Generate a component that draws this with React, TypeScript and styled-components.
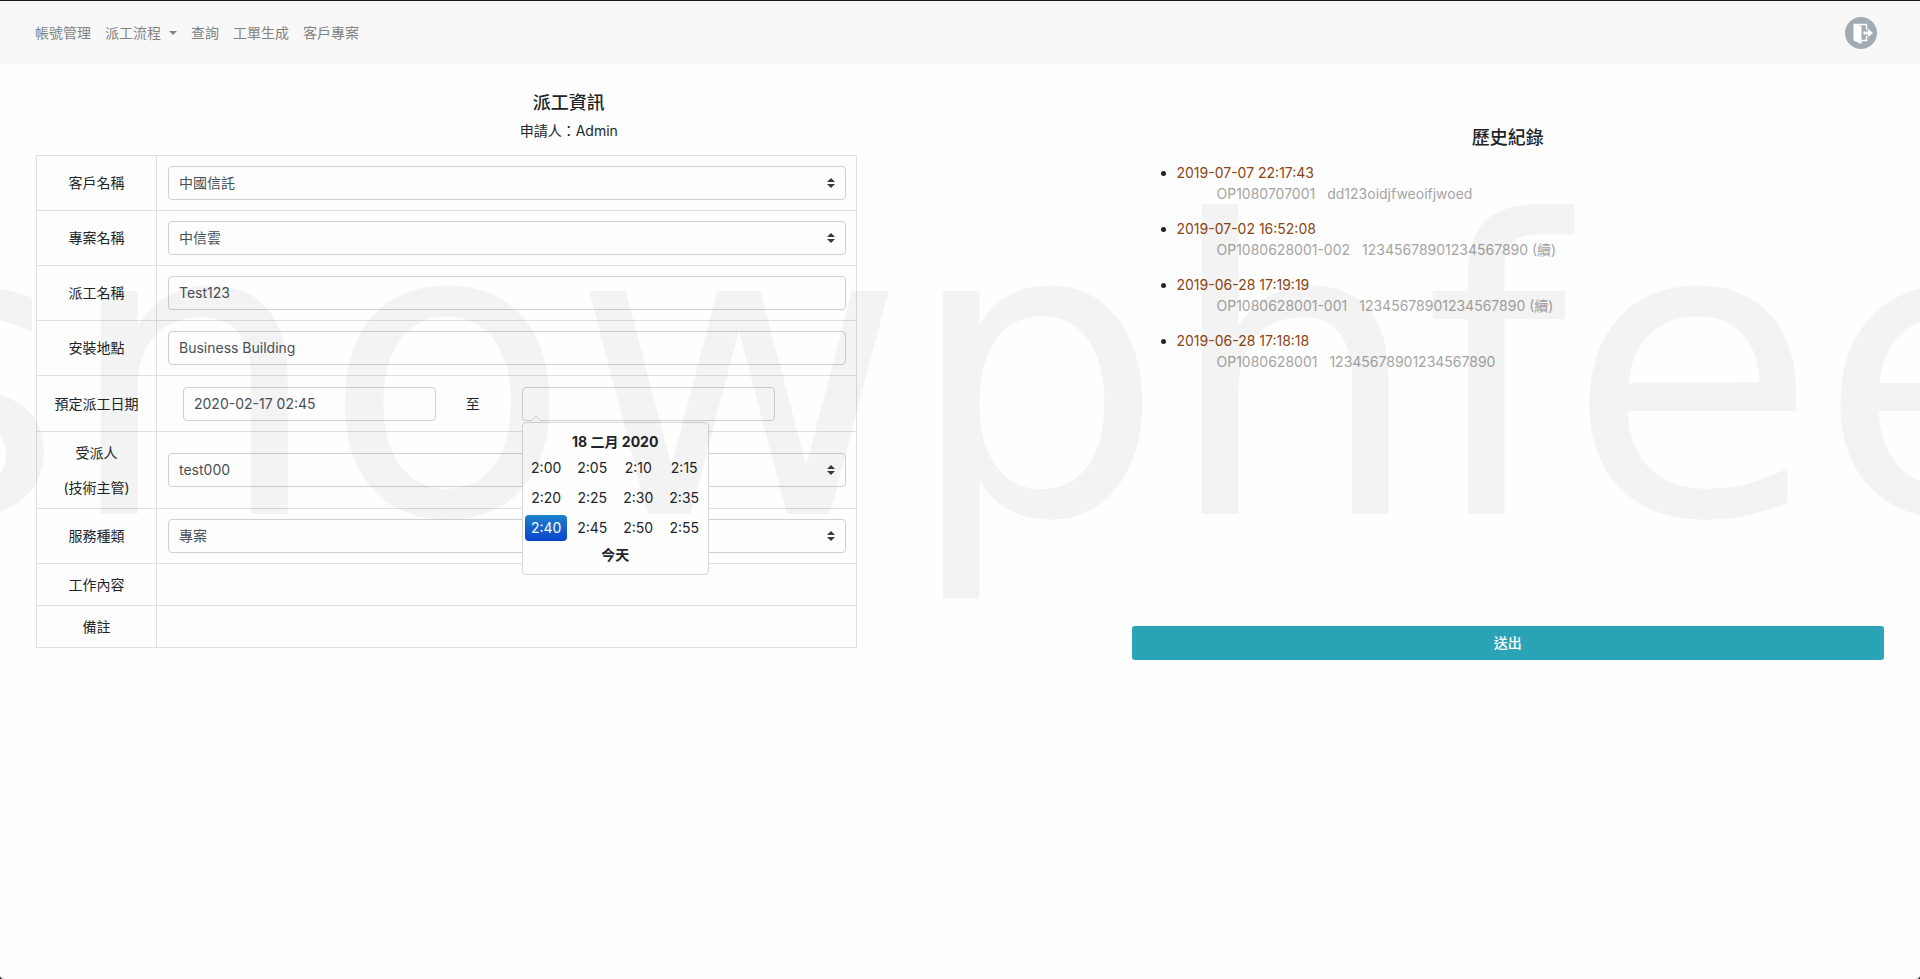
import React from 'react';
import styled, { createGlobalStyle, css } from 'styled-components';

const GlobalStyle = createGlobalStyle`
  *, *::before, *::after { box-sizing: border-box; }
  html { background: #1c1a1e; }
  body {
    margin: 0;
    color: #212529;
    font-family: Inter, "Noto Sans CJK TC", sans-serif;
    font-size: 14px;
    line-height: 21px;
  }
  button, input, select { font: inherit; }
`;

const Page = styled.div`
  position: relative;
  min-height: 100vh;
  overflow: hidden;
  border-top: 1px solid #1c1a1e;
  border-radius: 0 0 4px 4px;
  background: #fefefe;
`;

const Watermark = styled.div`
  position: absolute;
  inset: 0;
  z-index: 10;
  display: flex;
  justify-content: center;
  padding-top: 92px;
  overflow: hidden;
  pointer-events: none;
  color: rgba(0, 0, 0, 0.045);
  font-family: "DejaVu Sans", sans-serif;
  font-size: 408px;
  line-height: 560px;
  white-space: nowrap;
`;

const Navbar = styled.header`
  display: flex;
  align-items: center;
  justify-content: space-between;
  height: 63px;
  padding: 0 43px 0 35px;
  background: #f8f8f8;
`;

const NavLinks = styled.nav`
  display: flex;
  gap: 14px;
`;

const NavLink = styled.a`
  display: flex;
  align-items: center;
  gap: 8px;
  color: #828282;
  text-decoration: none;
`;

const Caret = styled.span`
  border: 4px solid transparent;
  border-top-color: currentColor;
  border-bottom: 0;
`;

const LogoutButton = styled.button`
  display: flex;
  padding: 0;
  border: 0;
  background: none;
`;

const Columns = styled.main`
  display: grid;
  grid-template-columns: minmax(0, 7fr) minmax(0, 5fr);
  padding: 28px 21px;
`;

const Column = styled.section<{ $offset?: boolean }>`
  padding: ${(p) => (p.$offset ? '35px' : '0')} 15px 0;
`;

const Title = styled.h1`
  margin: 0;
  font-size: 18px;
  font-weight: 500;
  line-height: 22px;
  text-align: center;
`;

const Applicant = styled.p`
  margin: 6px 0 14px;
  text-align: center;
`;

const FormTable = styled.table`
  width: calc(77% + 1px);
  border-collapse: collapse;
  table-layout: fixed;
`;

const LabelCell = styled.th<{ $height?: number }>`
  width: 120px;
  height: ${(p) => p.$height ?? 55}px;
  padding: 0 0 ${(p) => (p.$height ? 0 : 2)}px;
  border: 1px solid #dee0e2;
  font-weight: 400;
  text-align: center;
`;

const LabelLine = styled.span`
  display: block;
  & + & { margin-top: 14px; }
`;

const FieldCell = styled.td`
  padding: 0 10px 0 11px;
  border: 1px solid #dee0e2;
`;

const control = css`
  display: block;
  width: 100%;
  height: 34px;
  padding: 0 10px 2px;
  border: 1px solid #ced0d3;
  border-radius: 4px;
  background: #fefefe;
  color: #495057;
  outline: 0;
`;

const TextInput = styled.input`${control}`;

const DateInput = styled(TextInput)`
  padding-bottom: 0;
`;

const SelectBox = styled.div`
  position: relative;
`;

const Select = styled.select`
  ${control}
  appearance: none;
`;

const SelectArrow = styled.svg`
  position: absolute;
  top: 12px;
  right: 11px;
  pointer-events: none;
`;

const DateRange = styled.div`
  display: grid;
  grid-template-columns: minmax(0, 5fr) minmax(0, 1fr) minmax(0, 5fr) minmax(0, 1fr);
  align-items: center;
`;

const DateCell = styled.div`
  position: relative;
  padding: 0 15px;
`;

const Picker = styled.div`
  position: absolute;
  top: 35px;
  left: 15px;
  z-index: 5;
  width: 187px;
  height: 153px;
  padding: 8px 3px 8px 2px;
  border: 1px solid #d5d6d7;
  border-radius: 4px;
  background: #fefefe;
  text-align: center;

  &::before {
    content: '';
    position: absolute;
    top: -6px;
    left: 8px;
    width: 10px;
    height: 10px;
    border: solid #d5d6d7;
    border-width: 1px 0 0 1px;
    background: #fefefe;
    transform: rotate(45deg);
    clip-path: polygon(0 0, 100% 0, 0 100%);
  }
`;

const PickerAction = styled.button`
  display: block;
  width: 100%;
  height: 21px;
  padding: 0;
  border: 0;
  background: none;
  color: #212529;
  font-weight: 700;
`;

const TimeGrid = styled.div`
  display: grid;
  grid-template-columns: repeat(4, 42px);
  justify-content: space-between;
  row-gap: 4px;
  padding: 3px 0;
`;

const TimeButton = styled.button<{ $active: boolean }>`
  height: 26px;
  padding: 0;
  border: 0;
  border-radius: 4px;
  background: ${(p) => (p.$active ? 'linear-gradient(#1c83cb, #0b44cb)' : 'none')};
  color: ${(p) => (p.$active ? '#fff' : '#212529')};
`;

const HistoryList = styled.ul`
  min-height: 450px;
  margin: 13px 0 14px;
  padding: 0 0 0 45px;
`;

const HistoryItem = styled.li`
  margin-bottom: 14px;
`;

const HistoryTime = styled.time`
  display: block;
  color: #8b4513;
`;

const HistoryDetail = styled.div`
  display: flex;
  gap: 12px;
  padding-left: 40px;
  color: #a4a4a4;
`;

const SubmitButton = styled.button`
  display: block;
  width: 100%;
  height: 34px;
  padding: 0 0 2px;
  border: 0;
  border-radius: 3px;
  background: #2aa3b7;
  color: #fff;
  font-weight: 500;
`;

const times = ['2:00', '2:05', '2:10', '2:15', '2:20', '2:25', '2:30', '2:35', '2:40', '2:45', '2:50', '2:55'];

const history = [
  { time: '2019-07-07 22:17:43', order: 'OP1080707001', name: 'dd123oidjfweoifjwoed' },
  { time: '2019-07-02 16:52:08', order: 'OP1080628001-002', name: '12345678901234567890 (續)' },
  { time: '2019-06-28 17:19:19', order: 'OP1080628001-001', name: '12345678901234567890 (續)' },
  { time: '2019-06-28 17:18:18', order: 'OP1080628001', name: '12345678901234567890' },
];

function LogoutIcon() {
  return (
    <svg width="32" height="32" viewBox="0 0 32 32" aria-hidden="true">
      <circle cx="16" cy="16" r="16" fill="#a3abb2" />
      <path d="M8.500 6.500L16.500 9V27L8.500 23.500Z" fill="#fff" />
      <path d="M10 7.500H21.500V12.500M21.500 19V23.500H16" fill="none" stroke="#fff" strokeWidth="1.500" />
      <path d="M18.500 14.500H23V11.500L28 16L23 20V17.500H18.500Z" fill="#fff" />
    </svg>
  );
}

function SelectField({ id, value }: { id: string; value: string }) {
  return (
    <SelectBox>
      <Select id={id} defaultValue={value}>
        <option>{value}</option>
      </Select>
      <SelectArrow width="8" height="10" viewBox="0 0 4 5" aria-hidden="true">
        <path fill="#343a40" d="M2 0L0 2h4zm0 5L0 3h4z" />
      </SelectArrow>
    </SelectBox>
  );
}

export default function App() {
  return (
    <>
      <GlobalStyle />
      <Page>
        <Navbar>
          <NavLinks>
            <NavLink href="#account">帳號管理</NavLink>
            <NavLink href="#flow">派工流程<Caret /></NavLink>
            <NavLink href="#search">查詢</NavLink>
            <NavLink href="#orders">工單生成</NavLink>
            <NavLink href="#projects">客戶專案</NavLink>
          </NavLinks>
          <LogoutButton type="button" aria-label="登出"><LogoutIcon /></LogoutButton>
        </Navbar>

        <Columns>
          <Column>
            <Title>派工資訊</Title>
            <Applicant>申請人：Admin</Applicant>
            <FormTable>
              <tbody>
                <tr>
                  <LabelCell scope="row"><label htmlFor="customer">客戶名稱</label></LabelCell>
                  <FieldCell><SelectField id="customer" value="中國信託" /></FieldCell>
                </tr>
                <tr>
                  <LabelCell scope="row"><label htmlFor="project">專案名稱</label></LabelCell>
                  <FieldCell><SelectField id="project" value="中信雲" /></FieldCell>
                </tr>
                <tr>
                  <LabelCell scope="row"><label htmlFor="name">派工名稱</label></LabelCell>
                  <FieldCell><TextInput id="name" defaultValue="Test123" /></FieldCell>
                </tr>
                <tr>
                  <LabelCell scope="row"><label htmlFor="place">安裝地點</label></LabelCell>
                  <FieldCell><TextInput id="place" defaultValue="Business Building" /></FieldCell>
                </tr>
                <tr>
                  <LabelCell scope="row" $height={56}><label htmlFor="start">預定派工日期</label></LabelCell>
                  <FieldCell>
                    <DateRange>
                      <DateCell><DateInput id="start" defaultValue="2020-02-17 02:45" /></DateCell>
                      <DateCell as="label" htmlFor="end">至</DateCell>
                      <DateCell>
                        <DateInput id="end" />
                        <Picker>
                          <PickerAction type="button">18 二月 2020</PickerAction>
                          <TimeGrid>
                            {times.map((t) => (
                              <TimeButton key={t} type="button" $active={t === '2:40'}>{t}</TimeButton>
                            ))}
                          </TimeGrid>
                          <PickerAction type="button">今天</PickerAction>
                        </Picker>
                      </DateCell>
                    </DateRange>
                  </FieldCell>
                </tr>
                <tr>
                  <LabelCell scope="row" $height={77}>
                    <label htmlFor="assignee">
                      <LabelLine>受派人</LabelLine>
                      <LabelLine>(技術主管)</LabelLine>
                    </label>
                  </LabelCell>
                  <FieldCell><SelectField id="assignee" value="test000" /></FieldCell>
                </tr>
                <tr>
                  <LabelCell scope="row"><label htmlFor="service">服務種類</label></LabelCell>
                  <FieldCell><SelectField id="service" value="專案" /></FieldCell>
                </tr>
                <tr>
                  <LabelCell scope="row" $height={42}>工作內容</LabelCell>
                  <FieldCell />
                </tr>
                <tr>
                  <LabelCell scope="row" $height={42}>備註</LabelCell>
                  <FieldCell />
                </tr>
              </tbody>
            </FormTable>
          </Column>

          <Column $offset>
            <Title as="h2">歷史紀錄</Title>
            <HistoryList>
              {history.map((h) => (
                <HistoryItem key={h.time}>
                  <HistoryTime>{h.time}</HistoryTime>
                  <HistoryDetail>
                    <span>{h.order}</span>
                    <span>{h.name}</span>
                  </HistoryDetail>
                </HistoryItem>
              ))}
            </HistoryList>
            <SubmitButton type="submit">送出</SubmitButton>
          </Column>
        </Columns>
        <Watermark aria-hidden="true">snowphfee</Watermark>
      </Page>
    </>
  );
}
